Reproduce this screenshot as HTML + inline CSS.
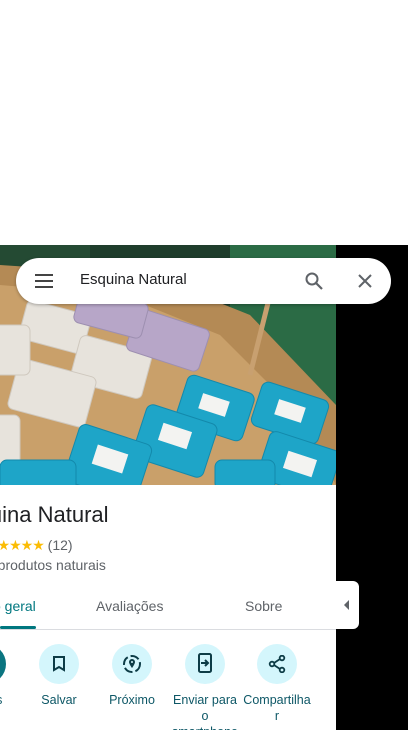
<!DOCTYPE html>
<html><head><meta charset="utf-8"><style>
*{margin:0;padding:0;box-sizing:border-box}
body{width:408px;height:730px;overflow:hidden;background:#fff;font-family:"Liberation Sans",Roboto,sans-serif;position:relative}
.abs{position:absolute}
.black{left:336px;top:245px;width:72px;height:485px;background:#000}
.panel{left:0;top:245px;width:336px;height:485px;background:#fff;overflow:hidden}
.search{left:16px;top:258px;width:375px;height:46px;background:#fff;border-radius:23px;box-shadow:0 1px 3px rgba(0,0,0,.3)}
.lbl{position:absolute;top:447px;font-size:12.5px;color:#0d5766;text-align:center;width:80px;line-height:16px}
.circ{position:absolute;top:399px;width:40px;height:40px;border-radius:50%;background:#d4f6fc}
</style></head><body>
<div class="abs black"></div>
<div class="abs panel">
<svg width="336" height="240" viewBox="0 0 336 240" style="position:absolute;left:0;top:0">
<rect width="336" height="240" fill="#244a33"/>
<rect x="230" y="0" width="106" height="240" fill="#2b6b45"/>
<rect x="90" y="0" width="140" height="60" fill="#1f3d2c"/>
<polygon points="0,20 150,30 250,70 336,160 336,240 0,240" fill="#b48a55"/>
<polygon points="0,40 120,50 220,90 300,170 336,240 0,240" fill="#c9a06a"/>
<line x1="270" y1="50" x2="250" y2="130" stroke="#c8a070" stroke-width="5"/>
<g fill="#e7e3dc" stroke="#cfc8be">
<rect x="22" y="62" width="66" height="40" rx="6" transform="rotate(15 55 82)"/>
<rect x="74" y="98" width="74" height="48" rx="6" transform="rotate(15 111 122)"/>
<rect x="12" y="122" width="80" height="52" rx="6" transform="rotate(15 52 148)"/>
<rect x="-20" y="80" width="50" height="50" rx="6"/>
<rect x="-20" y="170" width="40" height="60" rx="6"/>
</g>
<g fill="#b7a6c8" stroke="#9d8fb0">
<rect x="130" y="73" width="76" height="44" rx="6" transform="rotate(18 168 95)"/>
<rect x="76" y="50" width="70" height="36" rx="6" transform="rotate(15 111 68)"/>
</g>
<g fill="#1ea5c8" stroke="#1389ab">
<rect x="180" y="138" width="70" height="50" rx="7" transform="rotate(18 215 163)"/>
<rect x="255" y="145" width="70" height="46" rx="7" transform="rotate(18 290 168)"/>
<rect x="138" y="168" width="74" height="56" rx="7" transform="rotate(18 175 196)"/>
<rect x="70" y="188" width="76" height="60" rx="7" transform="rotate(18 108 218)"/>
<rect x="262" y="195" width="74" height="50" rx="7" transform="rotate(18 299 220)"/>
<rect x="0" y="215" width="76" height="40" rx="7"/>
<rect x="215" y="215" width="60" height="30" rx="7"/>
</g>
<g fill="#f3f3f1">
<rect x="200" y="152" width="28" height="16" transform="rotate(18 214 160)"/>
<rect x="276" y="158" width="28" height="16" transform="rotate(18 290 166)"/>
<rect x="160" y="182" width="30" height="18" transform="rotate(18 175 191)"/>
<rect x="94" y="204" width="32" height="20" transform="rotate(18 110 214)"/>
<rect x="285" y="210" width="30" height="18" transform="rotate(18 300 219)"/>
</g>
</svg>
<div class="abs" style="left:-48px;top:257px;font-size:22px;color:#202124;white-space:nowrap">Esquina Natural</div>
<div class="abs" style="left:-14px;top:292px;font-size:14px;color:#fbbc04;white-space:nowrap;letter-spacing:-1px">★★★★★<span style="color:#5f6368;letter-spacing:0"> (12)</span></div>
<div class="abs" style="left:-14px;top:312px;font-size:14px;color:#5f6368;white-space:nowrap">e produtos naturais</div>
<div class="abs" style="left:-34px;top:353px;font-size:14px;color:#00777f;white-space:nowrap">Visão geral</div>
<div class="abs" style="left:96px;top:353px;font-size:14px;color:#5f6368">Avaliações</div>
<div class="abs" style="left:245px;top:353px;font-size:14px;color:#5f6368">Sobre</div>
<div class="abs" style="left:0;top:381px;width:36px;height:3px;background:#00777f;border-radius:2px"></div>
<div class="abs" style="left:0;top:384px;width:336px;height:1px;background:#dadce0"></div>
<div class="circ" style="left:-34px;background:#0b7580"></div>
<div class="circ" style="left:39px"></div>
<div class="circ" style="left:112px"></div>
<div class="circ" style="left:185px"></div>
<div class="circ" style="left:257px"></div>
<svg class="abs" style="left:52px;top:411px" width="14" height="16" viewBox="0 0 14 16"><path d="M2 1h10v13l-5-3-5 3z" fill="none" stroke="#0d3c46" stroke-width="2"/></svg>
<svg class="abs" style="left:122px;top:409px" width="20" height="20" viewBox="0 0 20 20"><circle cx="10" cy="10" r="8" fill="none" stroke="#0d3c46" stroke-width="2" stroke-dasharray="9 3"/><path d="M10 5a3 3 0 0 1 3 3c0 2-3 6-3 6s-3-4-3-6a3 3 0 0 1 3-3z" fill="#0d3c46"/><circle cx="10" cy="8" r="1" fill="#d4f6fc"/></svg>
<svg class="abs" style="left:198px;top:408px" width="14" height="20" viewBox="0 0 14 20"><rect x="1" y="1" width="12" height="18" rx="1.5" fill="none" stroke="#0d3c46" stroke-width="2"/><path d="M3 10h6M7 7l3 3-3 3" fill="none" stroke="#0d3c46" stroke-width="2"/></svg>
<svg class="abs" style="left:268px;top:410px" width="18" height="18" viewBox="0 0 18 18"><circle cx="14" cy="3" r="2.3" fill="none" stroke="#0d3c46" stroke-width="1.8"/><circle cx="4" cy="9" r="2.3" fill="none" stroke="#0d3c46" stroke-width="1.8"/><circle cx="14" cy="15" r="2.3" fill="none" stroke="#0d3c46" stroke-width="1.8"/><path d="M6 8l6-4M6 10l6 4" stroke="#0d3c46" stroke-width="1.8"/></svg>
<div class="lbl" style="left:-54px">Rotas</div>
<div class="lbl" style="left:19px">Salvar</div>
<div class="lbl" style="left:92px">Próximo</div>
<div class="lbl" style="left:165px;width:80px">Enviar para<br>o<br>smartphone</div>
<div class="lbl" style="left:237px">Compartilha<br>r</div>
</div>
<div class="abs" style="left:336px;top:581px;width:23px;height:48px;background:#fff;border-radius:0 6px 6px 0"></div>
<svg class="abs" style="left:343px;top:599px" width="6" height="12" viewBox="0 0 6 12"><path d="M6 1L1 6l5 5z" fill="#5f6368"/></svg>
<div class="abs search"></div>
<svg class="abs" style="left:34px;top:273px" width="20" height="16" viewBox="0 0 20 16"><path d="M1 2h18M1 8h18M1 14h18" stroke="#444" stroke-width="2"/></svg>
<div class="abs" style="left:80px;top:271px;font-size:15px;color:#202124">Esquina Natural</div>
<svg class="abs" style="left:304px;top:271px" width="20" height="20" viewBox="0 0 20 20"><circle cx="8" cy="8" r="5.5" fill="none" stroke="#5f6368" stroke-width="2"/><path d="M12 12l6 6" stroke="#5f6368" stroke-width="2.2"/></svg>
<svg class="abs" style="left:357px;top:273px" width="16" height="16" viewBox="0 0 16 16"><path d="M2 2l12 12M14 2L2 14" stroke="#5f6368" stroke-width="2"/></svg>
</body></html>
